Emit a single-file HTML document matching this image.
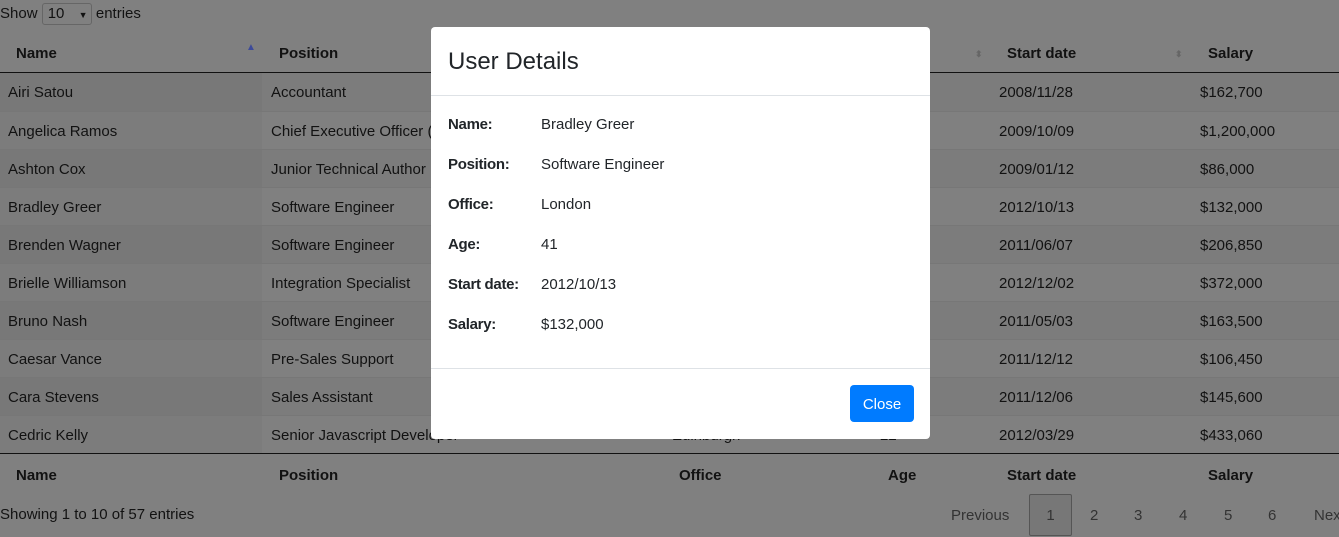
<!DOCTYPE html>
<html><head><meta charset="utf-8"><style>
*{margin:0;padding:0;box-sizing:border-box}
body{width:1339px;height:536px;overflow:hidden;background:#808080;font-family:"Liberation Sans",sans-serif;font-size:15px;color:#121212;position:relative}
.a{position:absolute;white-space:nowrap}
.row{position:absolute;left:0;width:1339px;height:38px}
.row div{position:absolute;top:1px;line-height:38px}
.b{font-weight:bold}
.modal{position:absolute;left:431px;top:27px;width:499px;height:412px;background:#fff;border-radius:4px;color:#212529}
.pg{position:absolute;top:494px;height:42px;line-height:42px;color:#333;font-size:15px}
</style></head><body>
<div class="a" style="left:0;top:3px">Show <span style="display:inline-block;width:50px;height:22px;border:1px solid #666;border-radius:3px;padding-left:5px;vertical-align:middle;line-height:20px">10 <span style="font-size:9px;margin-left:10px">▼</span></span> entries</div>
<div class="row b" style="top:33px;height:40px;border-bottom:1px solid #111">
<div style="left:16px;line-height:40px">Name</div><div style="left:246px;font-size:10px;color:#3d4a99;line-height:28px">▲</div>
<div style="left:279px;line-height:40px">Position</div><div style="left:975px;font-size:9px;color:#666;line-height:40px">⬍</div>
<div style="left:1007px;line-height:40px">Start date</div><div style="left:1175px;font-size:9px;color:#666;line-height:40px">⬍</div>
<div style="left:1208px;line-height:40px">Salary</div></div>
<div id="rows"></div>
<div class="row b" style="top:453px;height:42px;border-top:1px solid #111">
<div style="left:16px;line-height:42px">Name</div><div style="left:279px;line-height:42px">Position</div><div style="left:679px;line-height:42px">Office</div><div style="left:888px;line-height:42px">Age</div><div style="left:1007px;line-height:42px">Start date</div><div style="left:1208px;line-height:42px">Salary</div></div>
<div class="a" style="left:0;top:506px">Showing 1 to 10 of 57 entries</div>
<div class="pg" style="left:951px;top:495px">Previous</div>
<div class="pg" style="left:1029px;width:43px;border:1px solid #555;border-radius:2px;background:#777;text-align:center">1</div>
<div class="pg" style="left:1090px;top:495px">2</div><div class="pg" style="left:1134px;top:495px">3</div><div class="pg" style="left:1179px;top:495px">4</div><div class="pg" style="left:1224px;top:495px">5</div><div class="pg" style="left:1268px;top:495px">6</div><div class="pg" style="left:1314px;top:495px">Next</div>
<div class="modal">
<div class="a" style="left:17px;top:21px;font-size:24px;font-weight:500">User Details</div>
<div class="a" style="left:0;top:68px;width:499px;border-top:1px solid #dee2e6"></div>
<div id="det"></div>
<div class="a" style="left:0;top:341px;width:499px;border-top:1px solid #dee2e6"></div>
<div class="a" style="left:419px;top:358px;width:64px;height:37px;background:#007bff;color:#fff;border-radius:4px;text-align:center;line-height:39px;font-size:15px">Close</div>
</div>
<script>
var d=[["Airi Satou","Accountant","Tokyo","33","2008/11/28","$162,700"],["Angelica Ramos","Chief Executive Officer (CEO)","London","47","2009/10/09","$1,200,000"],["Ashton Cox","Junior Technical Author","San Francisco","66","2009/01/12","$86,000"],["Bradley Greer","Software Engineer","London","41","2012/10/13","$132,000"],["Brenden Wagner","Software Engineer","San Francisco","28","2011/06/07","$206,850"],["Brielle Williamson","Integration Specialist","New York","61","2012/12/02","$372,000"],["Bruno Nash","Software Engineer","London","38","2011/05/03","$163,500"],["Caesar Vance","Pre-Sales Support","New York","21","2011/12/12","$106,450"],["Cara Stevens","Sales Assistant","New York","46","2011/12/06","$145,600"],["Cedric Kelly","Senior Javascript Developer","Edinburgh","22","2012/03/29","$433,060"]];
var x=[8,271,672,880,999,1200],h="";
d.forEach(function(r,i){var odd=i%2==0;h+='<div class="row" style="top:'+(73+i*38)+'px;background:'+(odd?'#7c7c7c':'#808080')+';border-top:'+(i?'1px solid #777':'0')+'"><div style="left:0;top:0;width:262px;height:38px;background:'+(odd?'#787878':'#7c7c7c')+'"></div>';r.forEach(function(c,j){h+='<div style="left:'+x[j]+'px">'+c+'</div>'});h+='</div>'});
document.getElementById('rows').innerHTML=h;
var m=[["Name:","Bradley Greer"],["Position:","Software Engineer"],["Office:","London"],["Age:","41"],["Start date:","2012/10/13"],["Salary:","$132,000"]],g="";
m.forEach(function(r,i){g+='<div class="a" style="left:17px;top:'+(89+i*40)+'px;font-weight:bold;font-size:15px;letter-spacing:-0.3px">'+r[0]+'</div><div class="a" style="left:110px;top:'+(89+i*40)+'px">'+r[1]+'</div>'});
document.getElementById('det').innerHTML=g;
</script>
</body></html>
